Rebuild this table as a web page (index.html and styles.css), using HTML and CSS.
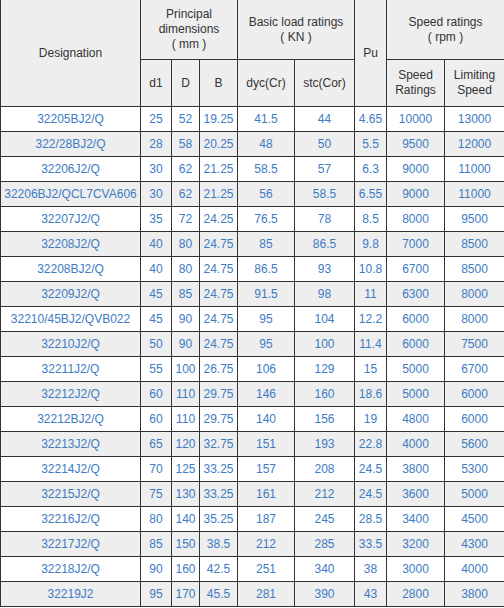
FILE: index.html
```html
<!DOCTYPE html>
<html>
<head>
<meta charset="utf-8">
<link rel="stylesheet" href="styles.css">
</head>
<body>
<table class="spec">
  <colgroup>
    <col class="c-des"><col class="c-d1"><col class="c-d"><col class="c-b"><col class="c-dyc"><col class="c-stc"><col class="c-pu"><col class="c-sr"><col class="c-ls">
  </colgroup>
  <thead>
    <tr class="h1">
      <th rowspan="2">Designation</th>
      <th colspan="3">Principal<br>dimensions<br>( mm )</th>
      <th colspan="2">Basic load ratings<br>( KN )</th>
      <th rowspan="2">Pu</th>
      <th colspan="2">Speed ratings<br>( rpm )</th>
    </tr>
    <tr class="h2">
      <th>d1</th><th>D</th><th>B</th>
      <th>dyc(Cr)</th><th>stc(Cor)</th>
      <th>Speed<br>Ratings</th><th>Limiting<br>Speed</th>
    </tr>
  </thead>
  <tbody>
    <tr><td>32205BJ2/Q</td><td>25</td><td>52</td><td>19.25</td><td>41.5</td><td>44</td><td>4.65</td><td>10000</td><td>13000</td></tr>
    <tr><td>322/28BJ2/Q</td><td>28</td><td>58</td><td>20.25</td><td>48</td><td>50</td><td>5.5</td><td>9500</td><td>12000</td></tr>
    <tr><td>32206J2/Q</td><td>30</td><td>62</td><td>21.25</td><td>58.5</td><td>57</td><td>6.3</td><td>9000</td><td>11000</td></tr>
    <tr><td>32206BJ2/QCL7CVA606</td><td>30</td><td>62</td><td>21.25</td><td>56</td><td>58.5</td><td>6.55</td><td>9000</td><td>11000</td></tr>
    <tr><td>32207J2/Q</td><td>35</td><td>72</td><td>24.25</td><td>76.5</td><td>78</td><td>8.5</td><td>8000</td><td>9500</td></tr>
    <tr><td>32208J2/Q</td><td>40</td><td>80</td><td>24.75</td><td>85</td><td>86.5</td><td>9.8</td><td>7000</td><td>8500</td></tr>
    <tr><td>32208BJ2/Q</td><td>40</td><td>80</td><td>24.75</td><td>86.5</td><td>93</td><td>10.8</td><td>6700</td><td>8500</td></tr>
    <tr><td>32209J2/Q</td><td>45</td><td>85</td><td>24.75</td><td>91.5</td><td>98</td><td>11</td><td>6300</td><td>8000</td></tr>
    <tr><td>32210/45BJ2/QVB022</td><td>45</td><td>90</td><td>24.75</td><td>95</td><td>104</td><td>12.2</td><td>6000</td><td>8000</td></tr>
    <tr><td>32210J2/Q</td><td>50</td><td>90</td><td>24.75</td><td>95</td><td>100</td><td>11.4</td><td>6000</td><td>7500</td></tr>
    <tr><td>32211J2/Q</td><td>55</td><td>100</td><td>26.75</td><td>106</td><td>129</td><td>15</td><td>5000</td><td>6700</td></tr>
    <tr><td>32212J2/Q</td><td>60</td><td>110</td><td>29.75</td><td>146</td><td>160</td><td>18.6</td><td>5000</td><td>6000</td></tr>
    <tr><td>32212BJ2/Q</td><td>60</td><td>110</td><td>29.75</td><td>140</td><td>156</td><td>19</td><td>4800</td><td>6000</td></tr>
    <tr><td>32213J2/Q</td><td>65</td><td>120</td><td>32.75</td><td>151</td><td>193</td><td>22.8</td><td>4000</td><td>5600</td></tr>
    <tr><td>32214J2/Q</td><td>70</td><td>125</td><td>33.25</td><td>157</td><td>208</td><td>24.5</td><td>3800</td><td>5300</td></tr>
    <tr><td>32215J2/Q</td><td>75</td><td>130</td><td>33.25</td><td>161</td><td>212</td><td>24.5</td><td>3600</td><td>5000</td></tr>
    <tr><td>32216J2/Q</td><td>80</td><td>140</td><td>35.25</td><td>187</td><td>245</td><td>28.5</td><td>3400</td><td>4500</td></tr>
    <tr><td>32217J2/Q</td><td>85</td><td>150</td><td>38.5</td><td>212</td><td>285</td><td>33.5</td><td>3200</td><td>4300</td></tr>
    <tr><td>32218J2/Q</td><td>90</td><td>160</td><td>42.5</td><td>251</td><td>340</td><td>38</td><td>3000</td><td>4000</td></tr>
    <tr><td>32219J2</td><td>95</td><td>170</td><td>45.5</td><td>281</td><td>390</td><td>43</td><td>2800</td><td>3800</td></tr>
  </tbody>
</table>
</body>
</html>
```
FILE: styles.css
```css
html, body {
  margin: 0;
  padding: 0;
  background: #fff;
}
.spec {
  width: 504px;
  margin-top: -1px;
  border-collapse: collapse;
  table-layout: fixed;
  font-family: "Liberation Sans", Arial, sans-serif;
  font-size: 12px;
}
.c-des { width: 140px; }
.c-d1 { width: 31px; }
.c-d { width: 28px; }
.c-b { width: 38px; }
.c-dyc { width: 57px; }
.c-stc { width: 60px; }
.c-pu { width: 32px; }
.c-sr { width: 58px; }
.c-ls { width: 60px; }
.spec th, .spec td {
  border: 1px solid #333;
  padding: 0;
  text-align: center;
  white-space: nowrap;
  overflow: hidden;
}
.spec th {
  background: #eee;
  color: #333;
  font-weight: normal;
  line-height: 15px;
}
.h1 th { height: 59px; }
.h2 th { height: 46px; }
.spec td {
  height: 24px;
  color: #3d7bc4;
  line-height: 24px;
}
.spec tbody tr:nth-child(even) td {
  background: #eee;
}
```
